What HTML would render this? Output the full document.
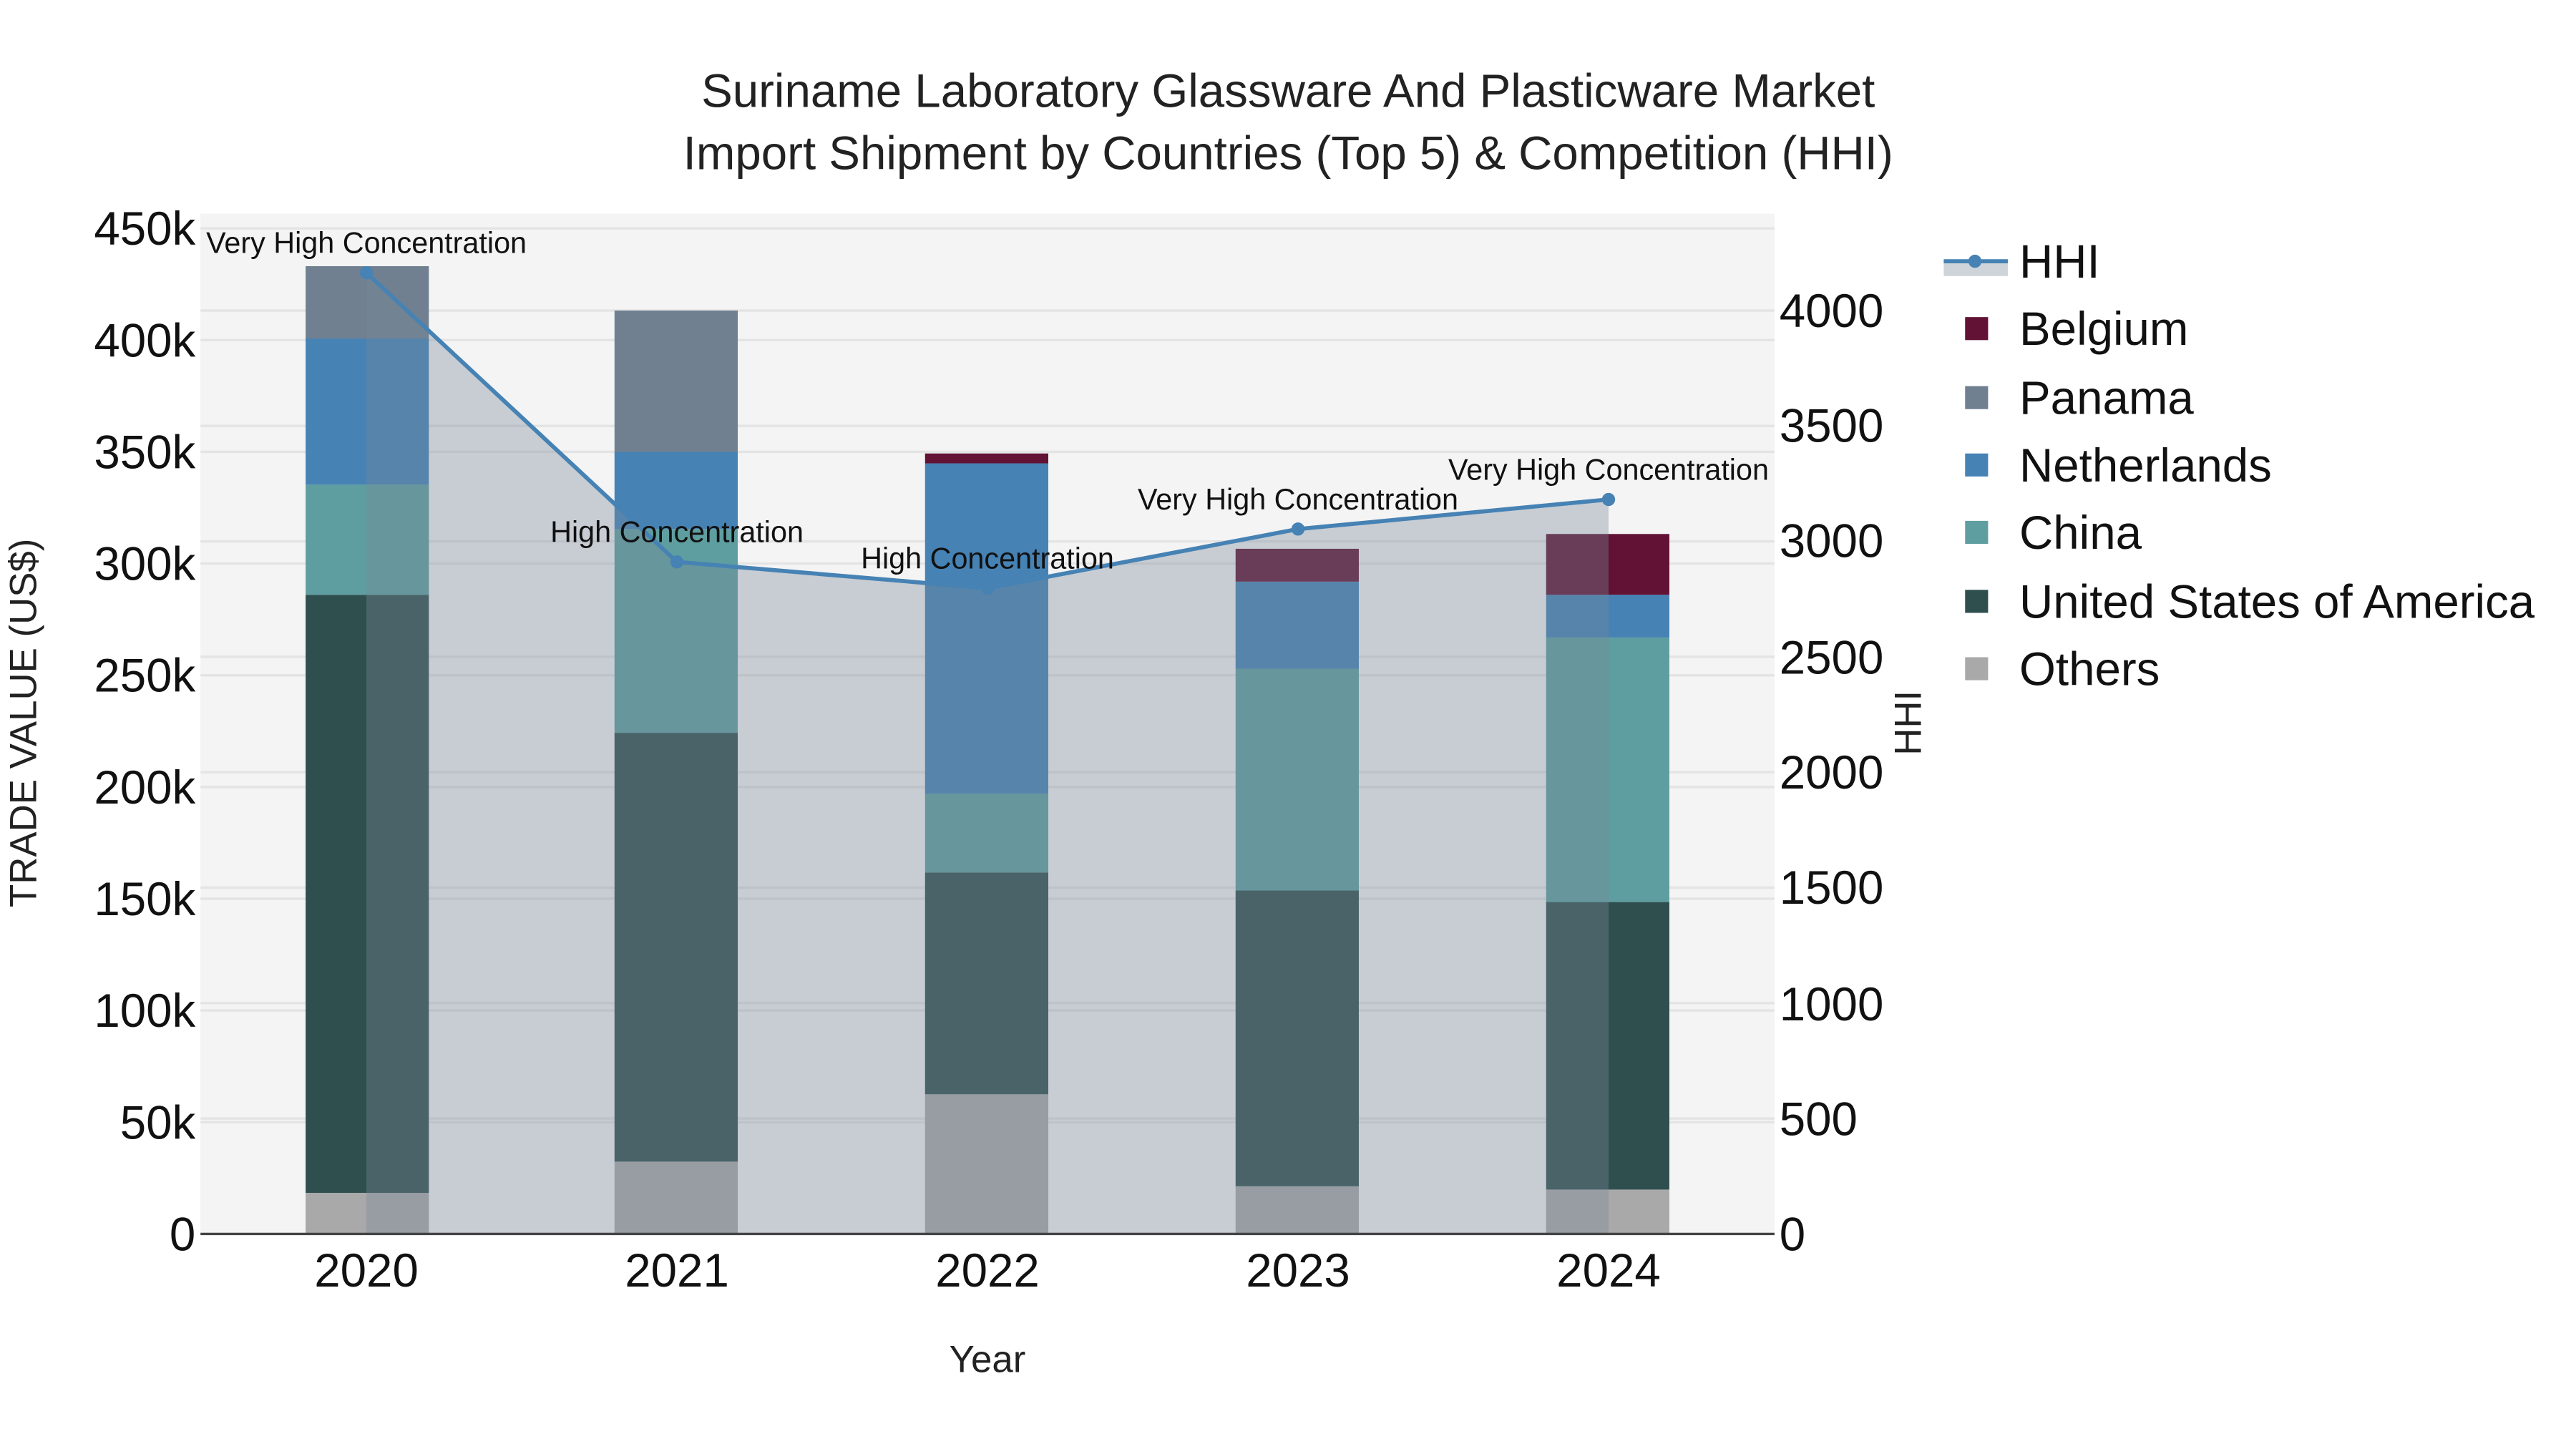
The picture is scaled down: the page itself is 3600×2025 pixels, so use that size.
<!DOCTYPE html>
<html><head><meta charset="utf-8"><style>html,body{margin:0;padding:0;background:#fff;}svg{display:block}</style></head>
<body>
<svg width="3600" height="2025" viewBox="0 0 1567.8 881.9" xmlns="http://www.w3.org/2000/svg" font-family="Liberation Sans, Arial, sans-serif">
<rect x="0" y="0" width="1567.8" height="881.9" fill="#fff"/>
<rect x="122" y="130" width="958" height="621" fill="#f4f4f4"/>
<g stroke="#e4e4e4" stroke-width="1.5">
<line x1="122" x2="1080" y1="683" y2="683"/><line x1="122" x2="1080" y1="615" y2="615"/><line x1="122" x2="1080" y1="547" y2="547"/><line x1="122" x2="1080" y1="479" y2="479"/><line x1="122" x2="1080" y1="411" y2="411"/><line x1="122" x2="1080" y1="343" y2="343"/><line x1="122" x2="1080" y1="275" y2="275"/><line x1="122" x2="1080" y1="207" y2="207"/><line x1="122" x2="1080" y1="139" y2="139"/>
<line x1="122" x2="1080" y1="680.75" y2="680.75"/><line x1="122" x2="1080" y1="610.5" y2="610.5"/><line x1="122" x2="1080" y1="540.25" y2="540.25"/><line x1="122" x2="1080" y1="470" y2="470"/><line x1="122" x2="1080" y1="399.75" y2="399.75"/><line x1="122" x2="1080" y1="329.5" y2="329.5"/><line x1="122" x2="1080" y1="259.25" y2="259.25"/><line x1="122" x2="1080" y1="189" y2="189"/>
</g>
<g>
<rect x="186" y="726" width="75" height="25" fill="#a9a9a9"/><rect x="186" y="362" width="75" height="364" fill="#2f4f4f"/><rect x="186" y="295" width="75" height="67" fill="#5f9ea0"/><rect x="186" y="206" width="75" height="89" fill="#4682b4"/><rect x="186" y="162" width="75" height="44" fill="#708090"/>
<rect x="374" y="707" width="75" height="44" fill="#a9a9a9"/><rect x="374" y="446" width="75" height="261" fill="#2f4f4f"/><rect x="374" y="322" width="75" height="124" fill="#5f9ea0"/><rect x="374" y="275" width="75" height="47" fill="#4682b4"/><rect x="374" y="189" width="75" height="86" fill="#708090"/>
<rect x="563" y="666" width="75" height="85" fill="#a9a9a9"/><rect x="563" y="531" width="75" height="135" fill="#2f4f4f"/><rect x="563" y="483" width="75" height="48" fill="#5f9ea0"/><rect x="563" y="282" width="75" height="201" fill="#4682b4"/><rect x="563" y="276" width="75" height="6" fill="#611235"/>
<rect x="752" y="722" width="75" height="29" fill="#a9a9a9"/><rect x="752" y="542" width="75" height="180" fill="#2f4f4f"/><rect x="752" y="407" width="75" height="135" fill="#5f9ea0"/><rect x="752" y="354" width="75" height="53" fill="#4682b4"/><rect x="752" y="334" width="75" height="20" fill="#611235"/>
<rect x="941" y="724" width="75" height="27" fill="#a9a9a9"/><rect x="941" y="549" width="75" height="175" fill="#2f4f4f"/><rect x="941" y="388" width="75" height="161" fill="#5f9ea0"/><rect x="941" y="362" width="75" height="26" fill="#4682b4"/><rect x="941" y="325" width="75" height="37" fill="#611235"/>
</g>
<polygon points="223,166 412,342 601,358 790,322 979,304 979,751 223,751" fill="rgb(119,136,153)" fill-opacity="0.36"/>
<polyline points="223,166 412,342 601,358 790,322 979,304" fill="none" stroke="#4682b4" stroke-width="2.5"/>
<g fill="#4682b4"><circle cx="223" cy="166" r="4"/><circle cx="412" cy="342" r="4"/><circle cx="601" cy="358" r="4"/><circle cx="790" cy="322" r="4"/><circle cx="979" cy="304" r="4"/></g>
<line x1="122" x2="1080" y1="751" y2="751" stroke="#444" stroke-width="1.5"/>
<g font-size="18" fill="#111" text-anchor="middle">
<text x="223" y="154">Very High Concentration</text>
<text x="412" y="330">High Concentration</text>
<text x="601" y="346">High Concentration</text>
<text x="790" y="310">Very High Concentration</text>
<text x="979" y="292">Very High Concentration</text>
</g>
<g font-size="28.5" fill="#111" text-anchor="end">
<text x="119" y="761">0</text><text x="119" y="693">50k</text><text x="119" y="625">100k</text><text x="119" y="557">150k</text><text x="119" y="489">200k</text><text x="119" y="421">250k</text><text x="119" y="353">300k</text><text x="119" y="285">350k</text><text x="119" y="217">400k</text><text x="119" y="149">450k</text>
</g>
<g font-size="28.5" fill="#111">
<text x="1083" y="761">0</text><text x="1083" y="691">500</text><text x="1083" y="621">1000</text><text x="1083" y="550">1500</text><text x="1083" y="480">2000</text><text x="1083" y="410">2500</text><text x="1083" y="339">3000</text><text x="1083" y="269">3500</text><text x="1083" y="199">4000</text>
</g>
<g font-size="28.5" fill="#111" text-anchor="middle">
<text x="223" y="783">2020</text><text x="412" y="783">2021</text><text x="601" y="783">2022</text><text x="790" y="783">2023</text><text x="979" y="783">2024</text>
</g>
<text x="601" y="835" font-size="23" fill="#222" text-anchor="middle">Year</text>
<text transform="translate(22,440) rotate(-90)" font-size="23" fill="#222" text-anchor="middle">TRADE VALUE (US$)</text>
<text transform="translate(1169,440) rotate(-90)" font-size="23" fill="#222" text-anchor="middle">HHI</text>
<g font-size="28.5" fill="#222" text-anchor="middle">
<text x="784" y="65">Suriname Laboratory Glassware And Plasticware Market</text>
<text x="784" y="103">Import Shipment by Countries (Top 5) &amp; Competition (HHI)</text>
</g>
<rect x="1183" y="159" width="39" height="9" fill="rgb(119,136,153)" fill-opacity="0.36"/>
<line x1="1183" x2="1222" y1="159" y2="159" stroke="#4682b4" stroke-width="2.5"/>
<circle cx="1202" cy="159" r="4" fill="#4682b4"/>
<rect x="1196" y="193" width="14" height="14" fill="#611235"/>
<rect x="1196" y="235" width="14" height="14" fill="#708090"/>
<rect x="1196" y="276" width="14" height="14" fill="#4682b4"/>
<rect x="1196" y="317" width="14" height="14" fill="#5f9ea0"/>
<rect x="1196" y="359" width="14" height="14" fill="#2f4f4f"/>
<rect x="1196" y="400" width="14" height="14" fill="#a9a9a9"/>
<g font-size="28.5" fill="#111">
<text x="1229" y="169">HHI</text><text x="1229" y="210">Belgium</text><text x="1229" y="252">Panama</text><text x="1229" y="293">Netherlands</text><text x="1229" y="334">China</text><text x="1229" y="376">United States of America</text><text x="1229" y="417">Others</text>
</g>
</svg>
</body></html>
